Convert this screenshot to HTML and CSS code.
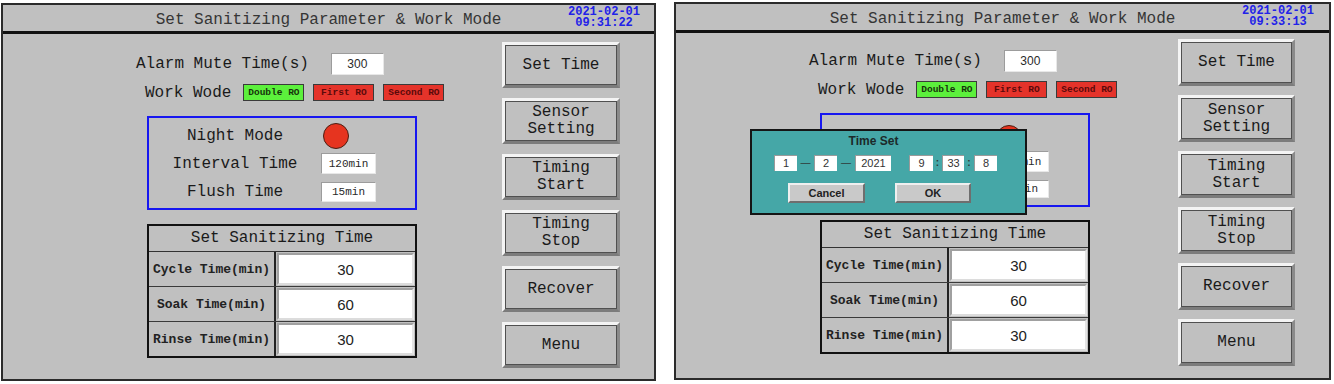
FILE: index.html
```html
<!DOCTYPE html>
<html lang="en">
<head>
<meta charset="utf-8">
<title>Set Sanitizing Parameter &amp; Work Mode</title>
<link rel="stylesheet" href="styles.css">
</head>
<body>
<div class="screens">
  <section class="panel panel--a">
    <header class="titlebar">
      <span></span>
      <h1 class="title">Set Sanitizing Parameter &amp; Work Mode</h1>
      <div class="clock"><span>2021-02-01</span><span>09:31:22</span></div>
    </header>
    <div class="body">
      <div class="left">
        <div class="alarm-row"><span class="label">Alarm Mute Time(s)</span><span class="field field--alarm">300</span></div>
        <div class="work-row"><span class="label">Work Wode</span><span class="mode mode--on">Double RO</span><span class="mode mode--off">First RO</span><span class="mode mode--off">Second RO</span></div>
        <div class="night-box">
          <div class="nb-row nb-row--1"><span class="label">Night Mode</span><span class="lamp"></span></div>
          <div class="nb-row nb-row--2"><span class="label">Interval Time</span><span class="field field--small">120min</span></div>
          <div class="nb-row nb-row--3"><span class="label">Flush Time</span><span class="field field--small">15min</span></div>
        </div>
        <div class="san-table">
          <div class="san-head">Set Sanitizing Time</div>
          <div class="san-row"><span class="san-label">Cycle Time(min)</span><span class="san-cell"><span class="san-value">30</span></span></div>
          <div class="san-row"><span class="san-label">Soak Time(min)</span><span class="san-cell"><span class="san-value">60</span></span></div>
          <div class="san-row"><span class="san-label">Rinse Time(min)</span><span class="san-cell"><span class="san-value">30</span></span></div>
        </div>
      </div>
      <nav class="buttons">
        <div class="btn">Set Time</div>
        <div class="btn">Sensor<br>Setting</div>
        <div class="btn">Timing<br>Start</div>
        <div class="btn">Timing<br>Stop</div>
        <div class="btn">Recover</div>
        <div class="btn">Menu</div>
      </nav>
    </div>
  </section>

  <section class="panel panel--b">
    <header class="titlebar">
      <span></span>
      <h1 class="title">Set Sanitizing Parameter &amp; Work Mode</h1>
      <div class="clock"><span>2021-02-01</span><span>09:33:13</span></div>
    </header>
    <div class="body">
      <div class="left">
        <div class="alarm-row"><span class="label">Alarm Mute Time(s)</span><span class="field field--alarm">300</span></div>
        <div class="work-row"><span class="label">Work Wode</span><span class="mode mode--on">Double RO</span><span class="mode mode--off">First RO</span><span class="mode mode--off">Second RO</span></div>
        <div class="night-box">
          <div class="nb-row nb-row--1"><span class="label">Night Mode</span><span class="lamp"></span></div>
          <div class="nb-row nb-row--2"><span class="label">Interval Time</span><span class="field field--small">120min</span></div>
          <div class="nb-row nb-row--3"><span class="label">Flush Time</span><span class="field field--small">15min</span></div>
        </div>
        <div class="san-table">
          <div class="san-head">Set Sanitizing Time</div>
          <div class="san-row"><span class="san-label">Cycle Time(min)</span><span class="san-cell"><span class="san-value">30</span></span></div>
          <div class="san-row"><span class="san-label">Soak Time(min)</span><span class="san-cell"><span class="san-value">60</span></span></div>
          <div class="san-row"><span class="san-label">Rinse Time(min)</span><span class="san-cell"><span class="san-value">30</span></span></div>
        </div>
      </div>
      <nav class="buttons">
        <div class="btn">Set Time</div>
        <div class="btn">Sensor<br>Setting</div>
        <div class="btn">Timing<br>Start</div>
        <div class="btn">Timing<br>Stop</div>
        <div class="btn">Recover</div>
        <div class="btn">Menu</div>
      </nav>
    </div>

    <div class="dialog">
      <div class="dialog-title">Time Set</div>
      <div class="dt-inputs">
        <span class="dt-box dt-box--d">1</span><span class="dt-sep dt-sep--dash">—</span>
        <span class="dt-box dt-box--d">2</span><span class="dt-sep dt-sep--dash2">—</span>
        <span class="dt-box dt-box--y">2021</span><span class="dt-sep dt-sep--space"></span>
        <span class="dt-box dt-box--h">9</span><span class="dt-sep dt-sep--colon">:</span>
        <span class="dt-box dt-box--m">33</span><span class="dt-sep dt-sep--colon2">:</span>
        <span class="dt-box dt-box--d">8</span>
      </div>
      <div class="dt-actions">
        <span class="dt-btn dt-btn--cancel">Cancel</span>
        <span class="dt-btn dt-btn--ok">OK</span>
      </div>
    </div>
  </section>
</div>
</body>
</html>
```

FILE: styles.css
```css
* { box-sizing: border-box; }

body {
  margin: 0;
  background: #ffffff;
  font-family: "Liberation Mono", "DejaVu Sans Mono", monospace;
  color: #1a1a1a;
}

.screens {
  display: flex;
  align-items: flex-start;
  gap: 18px;
  padding: 2px 0 0 1px;
}

.panel {
  position: relative;
  height: 378px;
  border: 2px solid #2b2b2b;
  background: #c0c0c0;
  display: flex;
  flex-direction: column;
}
.panel--a { width: 655px; margin-top: 1px; }
.panel--b { width: 657px; }

/* title bar */
.titlebar {
  flex: none;
  height: 29px;
  border-bottom: 3px solid #111;
  display: grid;
  grid-template-columns: 1fr auto 1fr;
  align-items: center;
}
.title {
  margin: 0;
  padding-top: 3px;
  font: 400 16px/18px "Liberation Mono", monospace;
  color: #353535;
  white-space: pre;
}
.clock {
  justify-self: end;
  margin-right: 14px;
  display: flex;
  flex-direction: column;
  align-items: center;
  font: 700 12px/11px "Liberation Mono", monospace;
  color: #2222e8;
}
.panel--b .clock { margin-right: 15px; }

/* body */
.body {
  flex: 1;
  display: grid;
  grid-template-columns: 499px 118px;
}
.panel--b .body { grid-template-columns: 502px 117px; }

.left {
  padding-left: 133px;
  display: flex;
  flex-direction: column;
  align-items: flex-start;
}

.label {
  font-size: 16px;
  line-height: 18px;
  white-space: pre;
  color: #1a1a1a;
}

.field {
  background: #ffffff;
  display: flex;
  align-items: center;
  justify-content: center;
  border-style: solid;
  border-width: 1px;
  border-color: #9c9c9c #e8e8e8 #e8e8e8 #9c9c9c;
  color: #2a2a2a;
}

.alarm-row {
  margin-top: 19px;
  height: 22px;
  display: flex;
  align-items: center;
  gap: 22px;
}
.panel--b .alarm-row { margin-top: 17px; }
.field--alarm {
  width: 53px;
  height: 22px;
  font: 12px "Liberation Sans", sans-serif;
}

.work-row {
  margin: 9px 0 0 9px;
  height: 17px;
  display: flex;
  align-items: center;
}
.work-row .label { margin-right: 12px; }
.mode {
  width: 61px;
  height: 17px;
  margin-right: 9px;
  border: 1px solid #3a3a3a;
  font: 700 9.5px/15px "Liberation Mono", monospace;
  text-align: center;
  white-space: pre;
}
.mode--on { background: #5cf03c; color: #17330c; }
.mode--off { background: #e5332a; color: #5a0a0a; }

/* night mode box */
.night-box {
  margin: 15px 0 0 11px;
  width: 270px;
  height: 94px;
  border: 2px solid #1717f0;
  padding-top: 4px;
  display: flex;
  flex-direction: column;
}
.panel--b .night-box { padding-top: 9px; }
.nb-row {
  display: flex;
  align-items: center;
}
.nb-row .label { width: 172px; text-align: center; }
.nb-row--1 { height: 27px; }
.nb-row--2 { height: 21px; margin-top: 4px; }
.nb-row--3 { height: 20px; margin-top: 8px; }
.panel--b .nb-row--2 { margin-top: 0; }
.panel--b .nb-row--3 { margin-top: 8px; height: 18px; }
.lamp {
  width: 26px;
  height: 26px;
  margin-left: 2px;
  border-radius: 50%;
  background: #e6341f;
  border: 1px solid #4a1e12;
}
.field--small {
  width: 55px;
  height: 100%;
  font: 11px "Liberation Mono", monospace;
}

/* sanitizing table */
.san-table {
  margin: 14px 0 0 11px;
  width: 270px;
  height: 134px;
  border: 2px solid #111;
  display: flex;
  flex-direction: column;
}
.panel--b .san-table { margin-top: 13px; }
.san-head {
  flex: none;
  height: 26px;
  border-bottom: 1px solid #333;
  text-align: center;
  font-size: 16px;
  line-height: 25px;
  color: #1a1a1a;
}
.san-row {
  flex: 1;
  display: grid;
  grid-template-columns: 127px 1fr;
}
.san-row + .san-row { border-top: 1px solid #3a3a3a; }
.san-label {
  border-right: 2px solid #222;
  display: flex;
  align-items: center;
  justify-content: center;
  font: 700 13px "Liberation Mono", monospace;
  white-space: pre;
  color: #222;
}
.san-cell {
  padding: 1px;
  display: flex;
}
.san-value {
  flex: 1;
  background: #ffffff;
  border: 2px solid;
  border-color: #a0a0a0 #e4e4e4 #dcdcdc #a0a0a0;
  display: flex;
  align-items: center;
  justify-content: center;
  font: 15px "Liberation Sans", sans-serif;
  color: #222;
}

/* buttons */
.buttons {
  display: flex;
  flex-direction: column;
  gap: 10px;
  margin-top: 8px;
}
.panel--b .buttons { margin-top: 6px; gap: 9px; }
.btn {
  height: 46px;
  border: 3px solid;
  border-color: #f4f4f4 #8a8a8a #7c7c7c #f4f4f4;
  box-shadow: inset 0 0 0 1px #505050;
  display: flex;
  align-items: center;
  justify-content: center;
  text-align: center;
  font-size: 16px;
  line-height: 17px;
  color: #1a1a1a;
}
.panel--b .btn { height: 47px; }

/* time set dialog */
.dialog {
  position: absolute;
  left: 74px;
  top: 125px;
  width: 277px;
  height: 86px;
  border: 2px solid #151515;
  background: #45a7a7;
  font-family: "Liberation Sans", sans-serif;
}
.dialog-title {
  margin-top: 4px;
  padding-right: 30px;
  text-align: center;
  font: 700 12px/13px "Liberation Sans", sans-serif;
  color: #1c2a2a;
}
.dt-inputs {
  margin: 7px 0 0 22px;
  height: 16px;
  display: flex;
}
.dt-box {
  height: 16px;
  background: #ffffff;
  border-top: 1px solid #9a9a9a;
  border-left: 1px solid #9a9a9a;
  font: 11px/15px "Liberation Sans", sans-serif;
  text-align: center;
  color: #333;
}
.dt-box--d { width: 23px; }
.dt-box--y { width: 36px; }
.dt-box--h { width: 24px; }
.dt-box--m { width: 22px; }
.dt-sep {
  text-align: center;
  font: 10px/16px "Liberation Sans", sans-serif;
  color: #2e3a3a;
}
.dt-sep--dash { width: 17px; }
.dt-sep--dash2 { width: 18px; }
.dt-sep--space { width: 18px; }
.dt-sep--colon { width: 9px; font-weight: 700; }
.dt-sep--colon2 { width: 10px; font-weight: 700; }

.dt-actions {
  margin: 12px 0 0 36px;
  display: flex;
  gap: 30px;
}
.dt-btn {
  height: 20px;
  background: #c9c9c9;
  border: 2px solid;
  border-color: #efefef #6e6e6e #6e6e6e #efefef;
  font: 700 11px/16px "Liberation Sans", sans-serif;
  text-align: center;
  color: #222;
}
.dt-btn--cancel { width: 77px; }
.dt-btn--ok { width: 76px; }
```
